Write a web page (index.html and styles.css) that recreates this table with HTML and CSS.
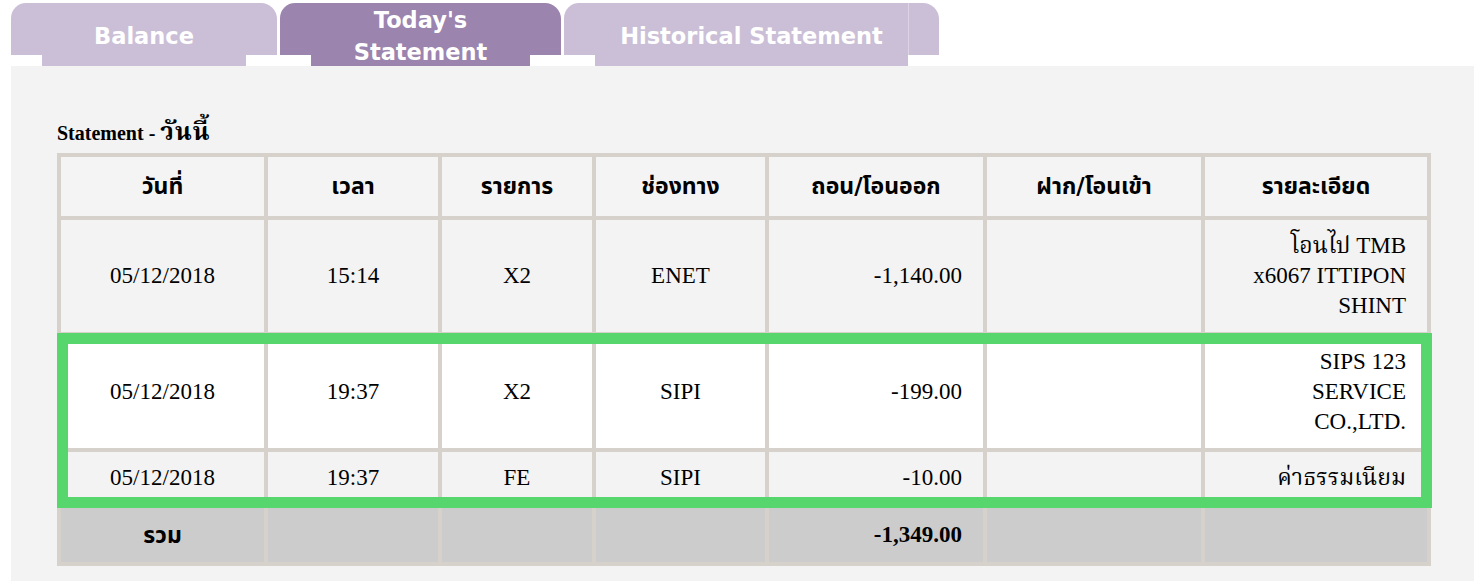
FILE: index.html
```html
<!DOCTYPE html>
<html lang="th">
<head>
<meta charset="utf-8">
<title>Statement</title>
<link rel="stylesheet" href="styles.css">
</head>
<body>
<div class="page">
  <nav class="tabs">
    <div class="tab">
      <span class="cap cap-l"></span>
      <span class="mid mid-balance">Balance</span>
      <span class="cap cap-r"></span>
    </div>
    <div class="tab tab-active">
      <span class="cap cap-l"></span>
      <span class="mid mid-today">Today's<br>Statement</span>
      <span class="cap cap-r"></span>
    </div>
    <div class="tab">
      <span class="cap cap-l"></span>
      <span class="mid mid-hist">Historical Statement</span>
      <span class="cap cap-r cap-split"></span>
    </div>
  </nav>
  <main class="panel">
    <h2 class="title">Statement - <span class="thai">วันนี้</span></h2>
    <div class="table-wrap">
      <table class="stmt">
        <colgroup>
          <col class="c1"><col class="c2"><col class="c3"><col class="c4"><col class="c5"><col class="c6"><col class="c7">
        </colgroup>
        <thead>
          <tr>
            <th>วันที่</th><th>เวลา</th><th>รายการ</th><th>ช่องทาง</th><th>ถอน/โอนออก</th><th>ฝาก/โอนเข้า</th><th>รายละเอียด</th>
          </tr>
        </thead>
        <tbody>
          <tr class="odd">
            <td>05/12/2018</td><td>15:14</td><td>X2</td><td>ENET</td><td class="num">-1,140.00</td><td class="num"></td><td class="num">โอนไป TMB<br>x6067 ITTIPON<br>SHINT</td>
          </tr>
          <tr class="even">
            <td>05/12/2018</td><td>19:37</td><td>X2</td><td>SIPI</td><td class="num">-199.00</td><td class="num"></td><td class="num">SIPS 123<br>SERVICE<br>CO.,LTD.</td>
          </tr>
          <tr class="odd">
            <td>05/12/2018</td><td>19:37</td><td>FE</td><td>SIPI</td><td class="num">-10.00</td><td class="num"></td><td class="num">ค่าธรรมเนียม</td>
          </tr>
          <tr class="total">
            <td class="th-total">รวม</td><td></td><td></td><td></td><td class="num">-1,349.00</td><td></td><td></td>
          </tr>
        </tbody>
      </table>
      <div class="highlight"></div>
    </div>
  </main>
</div>
</body>
</html>
```

FILE: styles.css
```css
html, body {
  margin: 0;
  padding: 0;
  background: #ffffff;
}

.page {
  padding: 3px 0 0 11px;
  font-family: "Liberation Serif", "Noto Serif Thai", "Noto Sans Thai", serif;
}

.tabs {
  display: flex;
  align-items: flex-start;
  gap: 3px;
  height: 63px;
}

.tab {
  display: flex;
  align-items: flex-start;
  color: #ffffff;
  font-family: "DejaVu Sans", "Noto Sans Thai", sans-serif;
  font-weight: bold;
  font-size: 22.5px;
}

.tab .cap,
.tab .mid {
  background: #cbbfd7;
}

.tab-active .cap,
.tab-active .mid {
  background: #9b84ae;
}

.cap {
  display: block;
  width: 31px;
  height: 52px;
}

.cap-l {
  border-top-left-radius: 15px;
}

.cap-r {
  border-top-right-radius: 16px;
}

.cap-split {
  box-shadow: inset 1px 0 0 #dcd3e4;
}

.mid {
  display: flex;
  align-items: center;
  justify-content: center;
  text-align: center;
  height: 63px;
  box-sizing: border-box;
  padding-top: 3px;
  white-space: nowrap;
}

.mid-balance {
  width: 204px;
}

.mid-today {
  width: 219px;
  line-height: 32px;
}

.mid-hist {
  width: 313px;
}

.panel {
  background: #f3f3f3;
  min-height: 520px;
  padding: 53px 0 0 46px;
  box-sizing: border-box;
}

.title {
  margin: 0 0 11px;
  height: 23px;
  font-size: 20px;
  line-height: 23px;
  font-weight: bold;
  color: #000;
}

.title .thai {
  font-size: 25px;
  line-height: 1;
  letter-spacing: 1px;
}

.table-wrap {
  position: relative;
  width: 1374px;
}

.stmt {
  width: 1374px;
  table-layout: fixed;
  border-collapse: collapse;
  border: 4px solid #d6d1ca;
  font-size: 23px;
  line-height: 30px;
  color: #000;
}

.c1 { width: 207px; }
.c2 { width: 174px; }
.c3 { width: 154px; }
.c4 { width: 173px; }
.c5 { width: 218px; }
.c6 { width: 218px; }
.c7 { width: 226px; }

.stmt th,
.stmt td {
  border: 4px solid #d6d1ca;
  padding: 11px 21px;
  text-align: center;
  vertical-align: middle;
}

.stmt th {
  background: #f4f4f4;
  font-family: "DejaVu Sans", "Noto Sans Thai", sans-serif;
  font-weight: bold;
  font-size: 23px;
  line-height: 35px;
  padding: 12px 10px;
}

.stmt td.num {
  text-align: right;
}

.odd td {
  background: #f3f3f3;
}

.even td {
  background: #ffffff;
}

.total td {
  background: #cccccc;
  font-weight: bold;
  padding-top: 12px;
  padding-bottom: 12px;
}

.total td.th-total {
  font-family: "DejaVu Sans", "Noto Sans Thai", sans-serif;
  font-size: 23px;
}

.highlight {
  position: absolute;
  left: 0;
  right: -1px;
  top: 180px;
  height: 175px;
  border: 11px solid #56d66d;
  box-sizing: border-box;
  pointer-events: none;
}
```
